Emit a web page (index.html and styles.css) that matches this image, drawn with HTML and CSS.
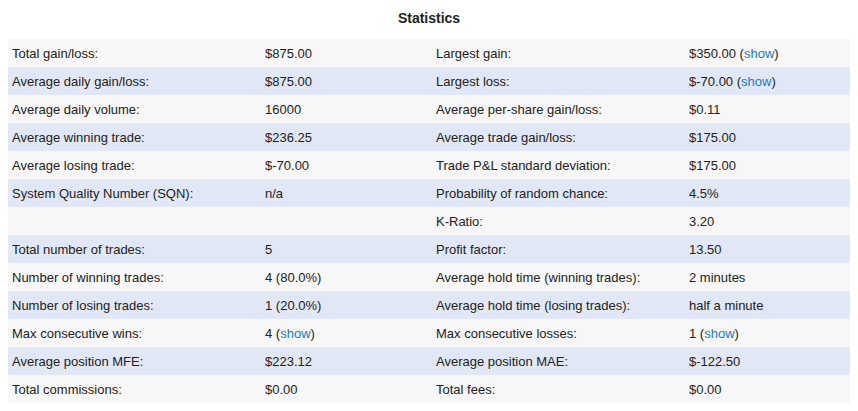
FILE: index.html
```html
<!DOCTYPE html>
<html>
<head>
<meta charset="utf-8">
<link rel="stylesheet" href="styles.css">
</head>
<body>
<div class="title">Statistics</div>
<table class="stats">
<colgroup><col class="c1"><col class="c2"><col class="c3"><col class="c4"></colgroup>
<tbody>
<tr><td>Total gain/loss:</td><td>$875.00</td><td>Largest gain:</td><td>$350.00 (<a href="#">show</a>)</td></tr>
<tr><td>Average daily gain/loss:</td><td>$875.00</td><td>Largest loss:</td><td>$-70.00 (<a href="#">show</a>)</td></tr>
<tr><td>Average daily volume:</td><td>16000</td><td>Average per-share gain/loss:</td><td>$0.11</td></tr>
<tr><td>Average winning trade:</td><td>$236.25</td><td>Average trade gain/loss:</td><td>$175.00</td></tr>
<tr><td>Average losing trade:</td><td>$-70.00</td><td>Trade P&amp;L standard deviation:</td><td>$175.00</td></tr>
<tr><td>System Quality Number (SQN):</td><td>n/a</td><td>Probability of random chance:</td><td>4.5%</td></tr>
<tr><td></td><td></td><td>K-Ratio:</td><td>3.20</td></tr>
<tr><td>Total number of trades:</td><td>5</td><td>Profit factor:</td><td>13.50</td></tr>
<tr><td>Number of winning trades:</td><td>4 (80.0%)</td><td>Average hold time (winning trades):</td><td>2 minutes</td></tr>
<tr><td>Number of losing trades:</td><td>1 (20.0%)</td><td>Average hold time (losing trades):</td><td>half a minute</td></tr>
<tr><td>Max consecutive wins:</td><td>4 (<a href="#">show</a>)</td><td>Max consecutive losses:</td><td>1 (<a href="#">show</a>)</td></tr>
<tr><td>Average position MFE:</td><td>$223.12</td><td>Average position MAE:</td><td>$-122.50</td></tr>
<tr><td>Total commissions:</td><td>$0.00</td><td>Total fees:</td><td>$0.00</td></tr>
</tbody>
</table>
</body>
</html>
```
FILE: styles.css
```css
html, body { background: #ffffff; }
body {
  margin: 8px;
  font-family: "Liberation Sans", Arial, Helvetica, sans-serif;
  font-size: 13px;
  color: #222222;
}
.title {
  text-align: center;
  font-weight: bold;
  font-size: 14px;
  line-height: 20px;
  padding-bottom: 11px;
}
.stats {
  width: 100%;
  border-collapse: collapse;
  table-layout: fixed;
}
.c1 { width: 253px; }
.c2 { width: 171px; }
.c3 { width: 253px; }
.c4 { width: auto; }
.stats td {
  height: 28px;
  padding: 0 4px;
  vertical-align: middle;
  white-space: nowrap;
}
.stats tr:nth-child(odd) td { background: #f7f7f7; }
.stats tr:nth-child(even) td { background: #e1e7f5; }
.stats a { color: #1a7ac4; text-decoration: none; }
```
